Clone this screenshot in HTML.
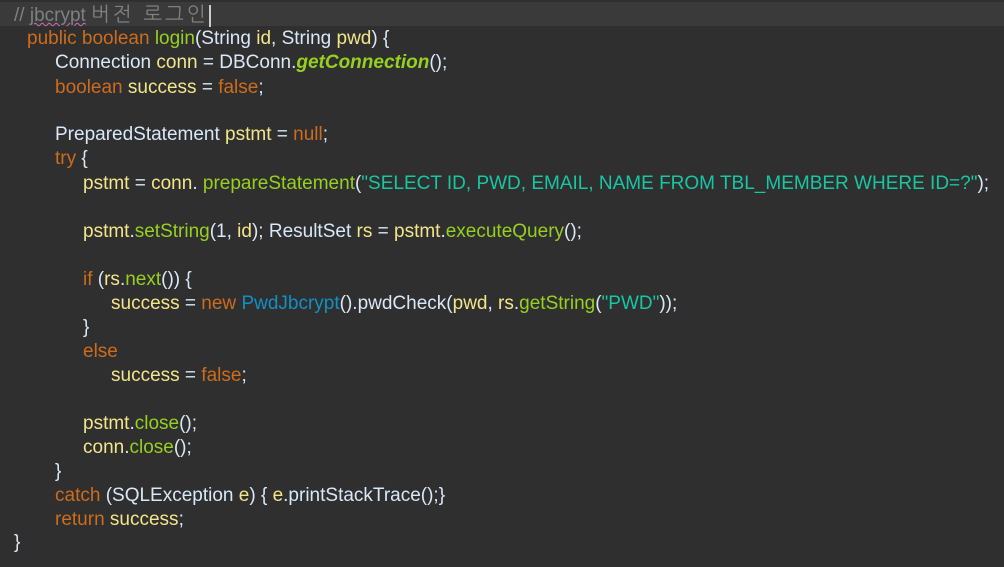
<!DOCTYPE html>
<html><head><meta charset="utf-8"><style>
html,body{margin:0;padding:0;background:#2f2f2f;width:1004px;height:567px;overflow:hidden}
.hl{position:absolute;left:0;top:2px;width:1004px;height:24px;background:#3a3a3a}
.l{position:absolute;white-space:pre;font:19px "Liberation Sans","NanumGothic",sans-serif;color:#d9e8f7;line-height:24px;margin-top:1px}
.k{color:#cc6c1d}.v{color:#f2e58a}.m{color:#96d020}.s{color:#17c6a3}.c{color:#1290c3}.g{color:#808080}
.i{font-style:italic;font-weight:bold;color:#96d020}
.u{text-decoration:underline wavy #d46bb0;text-decoration-thickness:1px}
.ko{letter-spacing:3px;font-size:20px}
.cur{display:inline-block;width:2px;height:22px;background:#ccc;vertical-align:middle}
</style></head><body>
<div class="hl"></div>
<div class="l g" style="left:14px;top:2px">// <span class="u">jbcrypt</span> <span class="ko">버전 로그인</span><span class="cur"></span></div>
<div class="l" style="left:27px;top:26px"><span class="k">public boolean</span> <span class="m">login</span>(String <span class="v">id</span>, String <span class="v">pwd</span>) {</div>
<div class="l" style="left:55px;top:50px">Connection <span class="v">conn</span> = DBConn.<span class="i">getConnection</span>();</div>
<div class="l" style="left:55px;top:75px"><span class="k">boolean</span> <span class="v">success</span> = <span class="k">false</span>;</div>
<div class="l" style="left:55px;top:122px">PreparedStatement <span class="v">pstmt</span> = <span class="k">null</span>;</div>
<div class="l" style="left:55px;top:146px"><span class="k">try</span> {</div>
<div class="l" style="left:83px;top:171px"><span class="v">pstmt</span> = <span class="v">conn</span>. <span class="m">prepareStatement</span>(<span class="s">"SELECT ID, PWD, EMAIL, NAME FROM TBL_MEMBER WHERE ID=?"</span>);</div>
<div class="l" style="left:83px;top:219px"><span class="v">pstmt</span>.<span class="m">setString</span>(1, <span class="v">id</span>); ResultSet <span class="v">rs</span> = <span class="v">pstmt</span>.<span class="m">executeQuery</span>();</div>
<div class="l" style="left:83px;top:267px"><span class="k">if</span> (<span class="v">rs</span>.<span class="m">next</span>()) {</div>
<div class="l" style="left:111px;top:291px"><span class="v">success</span> = <span class="k">new</span> <span class="c">PwdJbcrypt</span>().pwdCheck(<span class="v">pwd</span>, <span class="v">rs</span>.<span class="m">getString</span>(<span class="s">"PWD"</span>));</div>
<div class="l" style="left:83px;top:315px">}</div>
<div class="l" style="left:83px;top:339px"><span class="k">else</span></div>
<div class="l" style="left:111px;top:363px"><span class="v">success</span> = <span class="k">false</span>;</div>
<div class="l" style="left:83px;top:411px"><span class="v">pstmt</span>.<span class="m">close</span>();</div>
<div class="l" style="left:83px;top:435px"><span class="v">conn</span>.<span class="m">close</span>();</div>
<div class="l" style="left:55px;top:459px">}</div>
<div class="l" style="left:55px;top:483px"><span class="k">catch</span> (SQLException <span class="v">e</span>) { <span class="v">e</span>.printStackTrace();}</div>
<div class="l" style="left:55px;top:507px"><span class="k">return</span> <span class="v">success</span>;</div>
<div class="l" style="left:14px;top:530px">}</div>
</body></html>
